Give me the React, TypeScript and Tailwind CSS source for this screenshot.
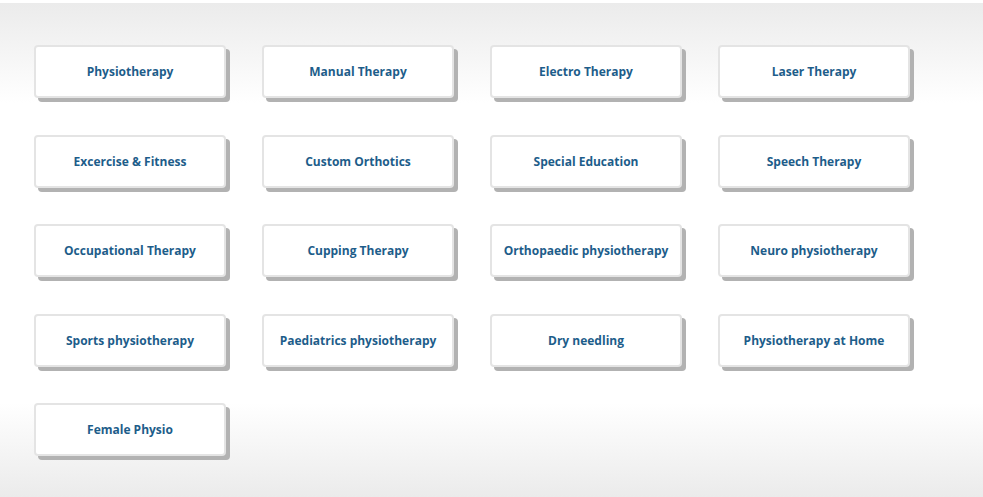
const services = [
  "Physiotherapy",
  "Manual Therapy",
  "Electro Therapy",
  "Laser Therapy",
  "Excercise & Fitness",
  "Custom Orthotics",
  "Special Education",
  "Speech Therapy",
  "Occupational Therapy",
  "Cupping Therapy",
  "Orthopaedic physiotherapy",
  "Neuro physiotherapy",
  "Sports physiotherapy",
  "Paediatrics physiotherapy",
  "Dry needling",
  "Physiotherapy at Home",
  "Female Physio",
];

export default function App() {
  return (
    <div className="w-[983px] h-[497px] bg-white pt-[3px] font-['Open_Sans',sans-serif]">
      <div className="h-[494px] bg-[linear-gradient(to_bottom,#ebebeb_0px,#ffffff_100px,#ffffff_400px,#ebebeb_494px)] pl-[34px] pt-[42px]">
        {/* Services grid */}
        <div className="grid grid-cols-[repeat(4,192px)] gap-x-[36px] gap-y-[36.5px]">
          {services.map((name) => (
            <a
              key={name}
              href="#"
              className="flex h-[53px] items-center justify-center rounded-[4px] border-2 border-[#e4e4e4] bg-white pt-px text-[12px] font-bold text-[#1d5d8a] shadow-[4px_4px_0_#b2b2b2]"
            >
              {name}
            </a>
          ))}
        </div>
      </div>
    </div>
  );
}
